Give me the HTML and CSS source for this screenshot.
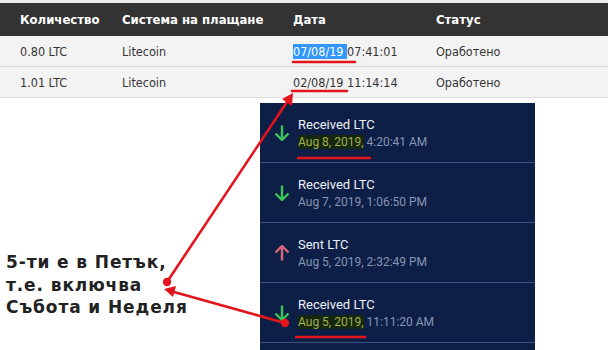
FILE: index.html
```html
<!DOCTYPE html>
<html>
<head>
<meta charset="utf-8">
<link rel="stylesheet" href="styles.css">
</head>
<body>
<div class="page">
  <div class="table">
    <div class="thead">
      <div>Количество</div><div>Система на плащане</div><div>Дата</div><div>Статус</div>
    </div>
    <div class="trow">
      <div>0.80 LTC</div><div>Litecoin</div><div><span class="sel">07/08/19 </span>07:41:01</div><div>Оработено</div>
    </div>
    <div class="trow">
      <div>1.01 LTC</div><div>Litecoin</div><div>02/08/19 11:14:14</div><div>Оработено</div>
    </div>
  </div>
  <div class="lower">
    <div class="note">5-ти е в Петък,<br>т.е. включва<br>Събота и Неделя</div>
    <div class="panel">
      <div class="tx">
        <svg class="ico" width="16" height="16" viewBox="0 0 16 16"><path d="M8 0.5V15M1.5 8.5L8 15L14.5 8.5" fill="none" stroke="#3cc35a" stroke-width="2.4"/></svg>
        <div class="txt"><div class="title">Received LTC</div><div class="date"><span class="hl">Aug 8, 2019,</span> 4:20:41 AM</div></div>
      </div>
      <div class="tx">
        <svg class="ico" width="16" height="16" viewBox="0 0 16 16"><path d="M8 0.5V15M1.5 8.5L8 15L14.5 8.5" fill="none" stroke="#3cc35a" stroke-width="2.4"/></svg>
        <div class="txt"><div class="title">Received LTC</div><div class="date">Aug 7, 2019, 1:06:50 PM</div></div>
      </div>
      <div class="tx">
        <svg class="ico" width="16" height="16" viewBox="0 0 16 16"><path d="M8 15.5V1M1.5 7.5L8 1L14.5 7.5" fill="none" stroke="#d9677a" stroke-width="2.4"/></svg>
        <div class="txt"><div class="title">Sent LTC</div><div class="date">Aug 5, 2019, 2:32:49 PM</div></div>
      </div>
      <div class="tx">
        <svg class="ico" width="16" height="16" viewBox="0 0 16 16"><path d="M8 0.5V15M1.5 8.5L8 15L14.5 8.5" fill="none" stroke="#3cc35a" stroke-width="2.4"/></svg>
        <div class="txt"><div class="title">Received LTC</div><div class="date"><span class="hl">Aug 5, 2019,</span> 11:11:20 AM</div></div>
      </div>
      <div class="tx"></div>
    </div>
  </div>
  <svg class="marks" width="608" height="350" viewBox="0 0 608 350">
    <g stroke="#e3141b" stroke-width="2.6" stroke-linecap="round" fill="none">
      <line x1="293" y1="62" x2="355" y2="62"/>
      <line x1="292" y1="91" x2="347" y2="91"/>
      <line x1="298" y1="158" x2="370" y2="158"/>
      <line x1="296" y1="337" x2="365" y2="337"/>
      <line x1="167" y1="282" x2="287" y2="102"/>
      <line x1="285" y1="323" x2="174" y2="292"/>
    </g>
    <g fill="#e3141b">
      <circle cx="167" cy="282" r="4.2"/>
      <circle cx="285" cy="323" r="4.2"/>
      <polygon points="293,93 292,106 282,99"/>
      <polygon points="164,289 176,286 173,297"/>
    </g>
  </svg>
</div>
</body>
</html>
```
FILE: styles.css
```css
html, body { margin: 0; padding: 0; background: #fff; }
.page { position: relative; width: 608px; height: 350px; overflow: hidden; }
.table {
  border-top: 3px solid #ececec;
  font-family: "DejaVu Sans Condensed", "DejaVu Sans", sans-serif;
}
.thead, .trow {
  display: grid;
  grid-template-columns: 102px 171px 143px 1fr;
  padding-left: 20px;
  align-items: center;
}
.thead {
  background: #333333;
  color: #fff;
  font-weight: bold;
  font-size: 13px;
  height: 33px;
}
.trow {
  background: #f3f3f3;
  color: #333;
  font-size: 12.5px;
  height: 30px;
  border-bottom: 1px solid #dcdcdc;
}
.sel { background: #3297fd; color: #fff; }
.lower { display: flex; align-items: flex-start; }
.note {
  width: 254px;
  padding: 153px 0 0 6px;
  font-family: "DejaVu Sans", sans-serif;
  font-weight: bold;
  font-size: 17px;
  line-height: 22.5px;
  letter-spacing: 0.9px;
  color: #222;
}
.panel {
  margin-top: 5px;
  width: 275px;
  height: 260px;
  background: #0d1f46;
  font-family: Roboto, "Open Sans", sans-serif;
}
.tx {
  height: 59px;
  border-bottom: 1px solid #3c5283;
  display: flex;
  align-items: center;
  padding-left: 14px;
  gap: 8px;
}
.ico { flex: none; }
.title { color: #eef1f7; font-size: 13px; line-height: 18px; }
.date { color: #8895b4; font-size: 12px; line-height: 16px; }
.hl { background: #15270f; color: #a4b24e; }
.marks { position: absolute; left: 0; top: 0; pointer-events: none; }
```
